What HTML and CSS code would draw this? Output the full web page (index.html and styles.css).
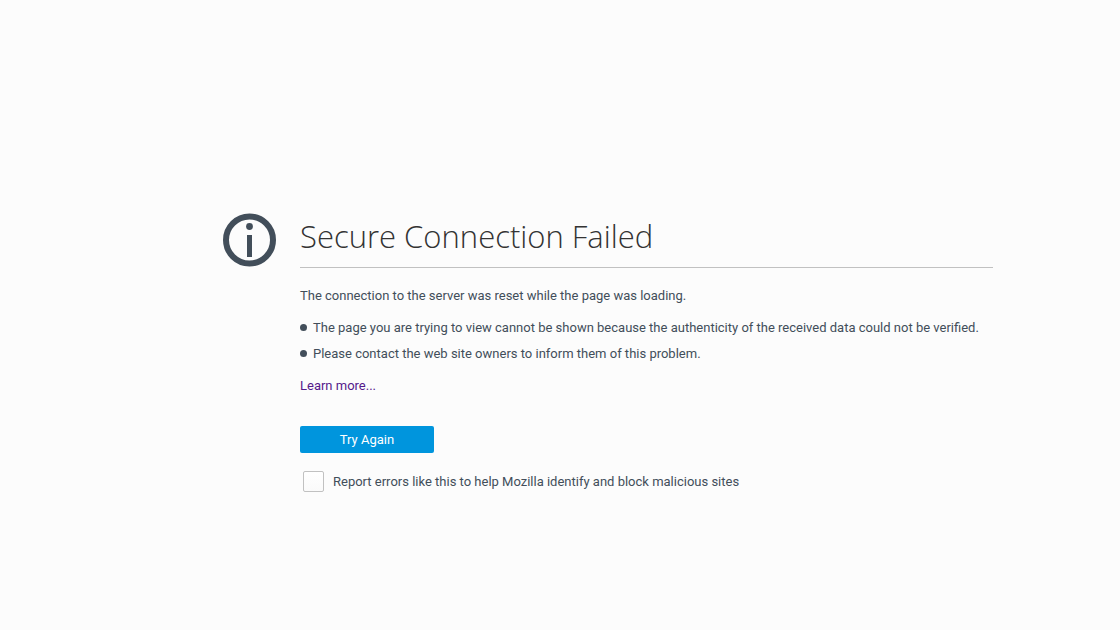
FILE: index.html
```html
<!DOCTYPE html>
<html lang="en">
<head>
    <meta charset="UTF-8">
    <meta name="viewport" content="width=device-width, initial-scale=1.0">
    <title>Secure Connection Failed</title>
    <link rel="stylesheet" href="styles.css">
</head>
<body>
    <main class="container">
        <svg class="icon" viewBox="0 0 54 54" aria-hidden="true">
            <circle cx="26.5" cy="27" r="23.5" fill="none" stroke="#424e5a" stroke-width="6"/>
            <circle cx="26.5" cy="13.5" r="3.4" fill="#424e5a"/>
            <rect x="24" y="22" width="5" height="22" fill="#424e5a"/>
        </svg>
        <div class="content">
            <h1 class="title">Secure Connection Failed</h1>
            <p class="description">The connection to the server was reset while the page was loading.</p>
            <ul class="reasons">
                <li>The page you are trying to view cannot be shown because the authenticity of the received data could not be verified.</li>
                <li>Please contact the web site owners to inform them of this problem.</li>
            </ul>
            <a class="learn-more" href="#">Learn more...</a>
            <button class="try-again" type="button">Try Again</button>
            <div class="report">
                <input class="report-box" type="checkbox" id="report">
                <label for="report">Report errors like this to help Mozilla identify and block malicious sites</label>
            </div>
        </div>
    </main>
</body>
</html>
```

FILE: styles.css
```css
* {
    box-sizing: border-box;
}

body {
    display: flex;
    flex-direction: column;
    align-items: center;
    justify-content: center;
    min-height: 100vh;
    margin: 0;
    padding: 72px 48px 0;
    background: #fcfcfc;
    color: #424e5a;
    font-family: Roboto, "Open Sans", sans-serif;
    font-size: 13px;
    line-height: 20px;
}

.container {
    display: flex;
    gap: 23px;
    width: 100%;
    max-width: 866px;
    padding-left: 96px;
}

.icon {
    flex: none;
    width: 54px;
    height: 54px;
    margin-top: 3px;
}

.content {
    flex: 1;
}

.title {
    margin: 0 0 18px;
    padding-bottom: 5px;
    border-bottom: 1px solid #c1c1c1;
    color: #333;
    font-family: "Open Sans", "Noto Sans", sans-serif;
    font-size: 31px;
    font-weight: 300;
    line-height: 52px;
}

.description {
    margin: 0 0 12px;
}

.reasons {
    margin: 0 0 12px;
    padding: 0;
    list-style: none;
}

.reasons li {
    display: flex;
    gap: 6px;
    margin-bottom: 6px;
}

.reasons li::before {
    content: "";
    flex: none;
    width: 7px;
    height: 7px;
    margin-top: 6px;
    border-radius: 50%;
    background: #424e5a;
}

.reasons li:last-child {
    margin-bottom: 0;
}

.learn-more {
    color: #551a8b;
    text-decoration: none;
}

.learn-more:hover {
    text-decoration: underline;
}

.try-again {
    display: block;
    min-width: 134px;
    margin: 30px 0 18px;
    padding: 4px 16px 3px;
    border: none;
    border-radius: 2px;
    background: #0095dd;
    color: #fff;
    font: inherit;
    cursor: pointer;
}

.report {
    display: flex;
    align-items: center;
    gap: 9px;
    padding-left: 3px;
}

.report-box {
    appearance: none;
    flex: none;
    width: 21px;
    height: 21px;
    margin: 0;
    border: 1px solid #c1c1c1;
    border-radius: 2px;
    background: linear-gradient(#fff, #fafafa);
}

.report-box:checked {
    background: #0095dd;
}
```
